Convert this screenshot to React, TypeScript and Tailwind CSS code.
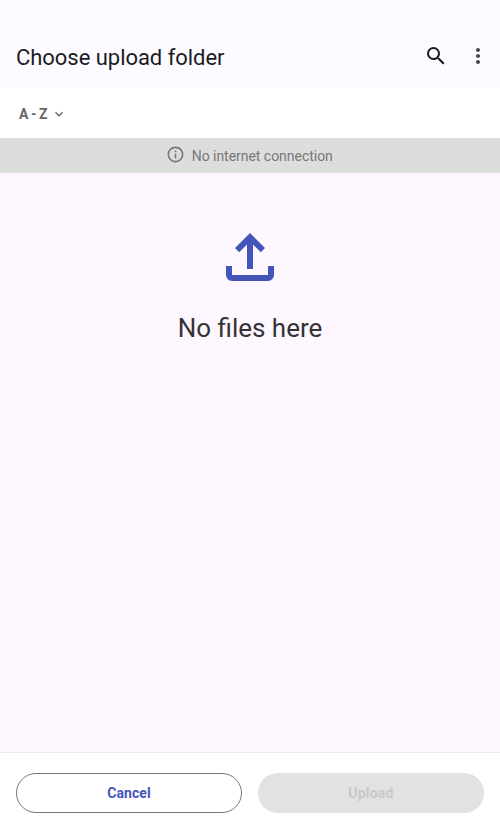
import React from "react";

type IconProps = { d: string; className: string; viewBox?: string };

function Icon({ d, className, viewBox = "0 0 24 24" }: IconProps) {
  return (
    <svg viewBox={viewBox} className={className} fill="currentColor" aria-hidden="true">
      <path d={d} />
    </svg>
  );
}

const SEARCH =
  "M15.5 14h-.79l-.28-.27A6.471 6.471 0 0 0 16 9.5 6.5 6.5 0 1 0 9.5 16c1.61 0 3.09-.59 4.23-1.57l.27.28v.79l5 4.99L20.49 19l-4.99-5zm-6 0C7.01 14 5 11.99 5 9.5S7.01 5 9.5 5 14 7.01 14 9.5 11.99 14 9.5 14z";
const MORE =
  "M12 8c1.1 0 2-.9 2-2s-.9-2-2-2-2 .9-2 2 .9 2 2 2zm0 2c-1.1 0-2 .9-2 2s.9 2 2 2 2-.9 2-2-.9-2-2-2zm0 6c-1.1 0-2 .9-2 2s.9 2 2 2 2-.9 2-2-.9-2-2-2z";
const CHEVRON = "M7.41 8.59 12 13.17l4.59-4.58L18 10l-6 6-6-6 1.41-1.41z";
const INFO =
  "M11 7h2v2h-2zm0 4h2v6h-2zm1-9C6.48 2 2 6.48 2 12s4.48 10 10 10 10-4.48 10-10S17.52 2 12 2zm0 18c-4.41 0-8-3.59-8-8s3.59-8 8-8 8 3.59 8 8-3.59 8-8 8z";
const UPLOAD =
  "M440-320v-326L336-542l-56-58 200-200 200 200-56 58-104-104v326h-80ZM240-160q-33 0-56.5-23.5T160-240v-120h80v120h480v-120h80v120q0 33-23.5 56.5T720-160H240Z";

export default function App() {
  return (
    <div className="flex h-[833px] w-[500px] flex-col overflow-hidden bg-[#fef7ff] font-['Roboto',sans-serif]">
      <header className="flex h-[88px] shrink-0 items-start bg-[#fdfbff] pt-11 pr-2.5 pl-4">
        <h1 className="flex-1 text-[22px] leading-[28px] tracking-[-0.04px] text-[#1b1b1f]">Choose upload folder</h1>
        <button aria-label="Search" className="mr-[18px] text-[#1b1b1f]">
          <Icon d={SEARCH} className="block size-6" />
        </button>
        <button aria-label="More options" className="text-[#46464f]">
          <Icon d={MORE} className="block size-6" />
        </button>
      </header>

      <div className="flex h-[50px] shrink-0 items-center bg-white pl-[19px] text-[#666666]">
        <button className="flex items-center pt-0.5">
          <span className="text-[14px] leading-5 font-bold [word-spacing:-1px]">A - Z</span>
          <Icon d={CHEVRON} className="ml-1 block size-4" />
        </button>
      </div>

      <div className="flex h-[35px] shrink-0 items-center justify-center gap-[7px] bg-[#dddddd] pr-[1.5px] text-[#777777]">
        <Icon d={INFO} className="mb-0.5 block size-[19px]" />
        <span className="text-[14px] leading-5 tracking-[-0.03px]">No internet connection</span>
      </div>

      <main className="flex flex-1 flex-col items-center pt-[60px]">
        <Icon d={UPLOAD} viewBox="160 -800 640 640" className="block size-12 text-[#4355b9]" />
        <p className="mt-[31px] text-[26px] leading-8 text-[#333333]">No files here</p>
      </main>

      <footer className="grid h-[81px] shrink-0 grid-cols-2 gap-4 border-t border-[#ececec] bg-white px-4 pt-5">
        <button className="h-10 rounded-full border border-[#767680] text-[14px] font-bold tracking-[0.1px] text-[#4355b9]">
          Cancel
        </button>
        <button disabled className="h-10 rounded-full bg-[#e2e2e2] text-[14px] font-bold tracking-[0.2px] text-[#c9c9c9]">
          Upload
        </button>
      </footer>
    </div>
  );
}
